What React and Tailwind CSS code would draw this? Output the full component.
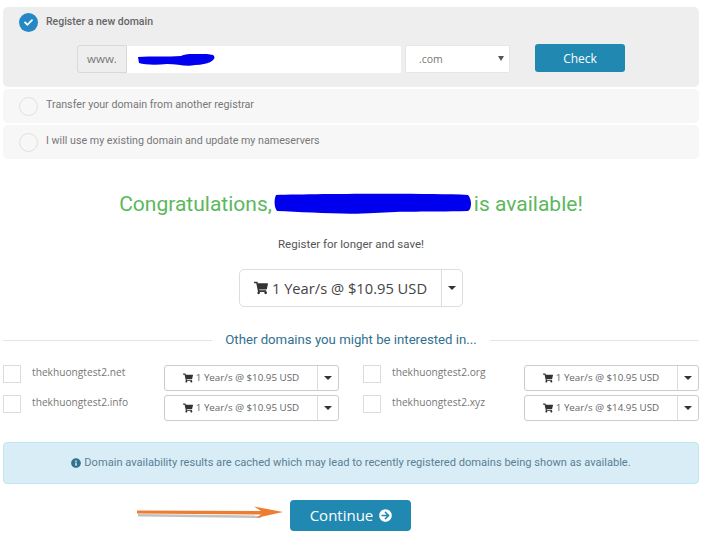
import React from "react";
import { FaShoppingCart, FaInfoCircle, FaArrowCircleRight, FaCheck } from "react-icons/fa";

const roboto = "font-['Roboto',sans-serif]";
const open = "font-['Open_Sans',sans-serif]";

function Radio({ label }) {
  return (
    <div className="flex items-center gap-[8px]">
      <span className="w-[19px] h-[19px] rounded-full border border-[#e0e0dc] bg-[#f7f7f7]" />
      <span className="text-[10.7px] leading-[16px] -mt-[2px] text-[#777]">{label}</span>
    </div>
  );
}

function Caret() {
  return <span className="w-0 h-0 border-x-[4px] border-x-transparent border-t-[4px] border-t-[#333]" />;
}

function PriceButton({ price }) {
  return (
    <div className={`flex w-[175px] h-[26px] shrink-0 border border-[#ccc] rounded-[3px] bg-white ${open}`}>
      <div className="flex-1 flex items-center justify-center gap-[3px] text-[9.8px] text-[#666]">
        <FaShoppingCart className="w-[10px] h-[10px] text-[#333]" />
        <span>1 Year/s @ {price} USD</span>
      </div>
      <div className="w-[21px] border-l border-[#ddd] flex items-center justify-center">
        <Caret />
      </div>
    </div>
  );
}

function Option({ name, price }) {
  return (
    <div className="flex items-start">
      <span className="w-[18px] h-[18px] shrink-0 border border-[#dcdcd8] bg-white" />
      <span className={`ml-[11px] flex-1 text-[10.2px] leading-[15px] text-[#777] ${open}`}>{name}</span>
      <PriceButton price={price} />
    </div>
  );
}

export default function App() {
  return (
    <div className={`w-[702px] h-[540px] overflow-hidden bg-white px-[3px] pt-[7px] ${roboto}`}>
      <div className="h-[80px] rounded-[5px] bg-[#eeeeee] pl-[16px] pt-[6px]">
        <div className="flex items-center gap-[8px]">
          <span className="w-[19px] h-[19px] rounded-full bg-[#2588c4] flex items-center justify-center">
            <FaCheck className="w-[9px] h-[9px] text-white" />
          </span>
          <span className="text-[10.5px] leading-[16px] -mt-[1px] font-medium text-[#666]">Register a new domain</span>
        </div>
        <div className="flex items-start mt-[13px] ml-[58px]">
          <div className="flex items-center w-[324px] h-[28px]">
            <span className={`w-[50px] h-[28px] flex items-center justify-center shrink-0 bg-[#eee] border border-[#d8d8d8] rounded-l-[3px] text-[11.5px] text-[#777] ${open}`}>www.</span>
            <div className="relative flex-1 h-[27px] bg-white rounded-r-[2px]">
              <svg className="absolute left-[10px] top-[8px]" width="80" height="14" viewBox="0 0 80 14">
                <path d="M1 3 C 15 2, 30 3, 44 2 C 50 -1, 68 -1, 76 1 C 80 4, 76 10, 58 11 C 50 13, 40 10, 30 10 C 20 11, 8 11, 2 9 Z" fill="#0000ee" />
              </svg>
            </div>
          </div>
          <div className={`relative w-[105px] h-[28px] ml-[4px] bg-white rounded-[2px] border border-[#e6e6e6] flex items-center pl-[13px] pt-[1px] text-[10.5px] text-[#777] ${open}`}>
            .com
            <span className="absolute right-[5px] top-[10px] w-0 h-0 border-x-[3px] border-x-transparent border-t-[5px] border-t-[#555]" />
          </div>
          <div className={`w-[90px] h-[28px] -mt-[1px] ml-[25px] pt-[1px] flex items-center justify-center rounded-[3px] bg-[#2188b2] text-white text-[12px] ${open}`}>Check</div>
        </div>
      </div>
      <div className="h-[34px] mt-[2px] rounded-[5px] bg-[#f7f7f7] pl-[16px] flex items-center">
        <Radio label="Transfer your domain from another registrar" />
      </div>
      <div className="h-[34px] mt-[2px] rounded-[5px] bg-[#f7f7f7] pl-[16px] flex items-center">
        <Radio label="I will use my existing domain and update my nameservers" />
      </div>

      <div className="mt-[31px] h-[28px] flex items-center justify-center text-[21px] leading-[28px] text-[#5cb85c]">
        <span>Congratulations,</span>
        <svg className="mx-[2px]" width="198" height="22" viewBox="0 0 198 22">
          <path d="M2 2 C 40 1, 150 0, 194 2 C 198 6, 198 16, 194 18 C 150 19, 130 18, 100 20 C 70 22, 30 19, 3 18 C 0 14, 0 6, 2 2 Z" fill="#0000ee" />
        </svg>
        <span>is available!</span>
      </div>
      <div className="mt-[17px] text-center text-[11.5px] leading-[18px] text-[#555]">Register for longer and save!</div>

      <div className="mt-[16px] flex justify-center">
        <div className={`flex w-[224px] h-[38px] border border-[#ddd] rounded-[5px] bg-white ${open}`}>
          <div className="flex-1 flex items-center justify-center gap-[4px] text-[14.7px] text-[#444]">
            <FaShoppingCart className="w-[14px] h-[14px] text-[#333]" />
            <span>1 Year/s @ $10.95 USD</span>
          </div>
          <div className="w-[21px] border-l border-[#ddd] flex items-center justify-center">
            <Caret />
          </div>
        </div>
      </div>

      <div className="mt-[23px] flex items-center">
        <div className="flex-1 h-px bg-[#e4e4e4]" />
        <div className="w-[278px] text-center text-[13.2px] leading-[20px] text-[#31708f]">Other domains you might be interested in...</div>
        <div className="flex-1 h-px bg-[#e4e4e4]" />
      </div>

      <div className="mt-[15px] grid grid-cols-2 gap-x-[24px] gap-y-[4px] w-[696px]">
        <Option name="thekhuongtest2.net" price="$10.95" />
        <Option name="thekhuongtest2.org" price="$10.95" />
        <Option name="thekhuongtest2.info" price="$10.95" />
        <Option name="thekhuongtest2.xyz" price="$14.95" />
      </div>

      <div className="mt-[21px] h-[42px] rounded-[4px] border border-[#bce8f1] bg-[#d9edf7] flex items-center justify-center gap-[3px] text-[11.1px] text-[#5a7f93]">
        <FaInfoCircle className="w-[10px] h-[10px] text-[#31708f]" />
        <span>Domain availability results are cached which may lead to recently registered domains being shown as available.</span>
      </div>

      <div className="relative mt-[16px] pr-[2px] flex justify-center">
        <svg className="absolute left-[132px] top-[3px]" width="150" height="20" viewBox="0 0 150 20">
          <path d="M3 11 L 126 12.5 L 126 15 L 3 13.5 Z" fill="#666" opacity="0.4" />
          <path d="M2 7.5 L 126 8 L 119 3.5 L 148 9 L 121 15 L 126 11.5 L 2 10.5 Z" fill="#ed7d31" />
        </svg>
        <div className={`w-[121px] h-[31px] rounded-[4px] bg-[#2188b2] flex items-center justify-center gap-[6px] pl-[2px] text-white text-[15px] ${open}`}>
          <span>Continue</span>
          <FaArrowCircleRight className="w-[13px] h-[13px]" />
        </div>
      </div>
    </div>
  );
}
